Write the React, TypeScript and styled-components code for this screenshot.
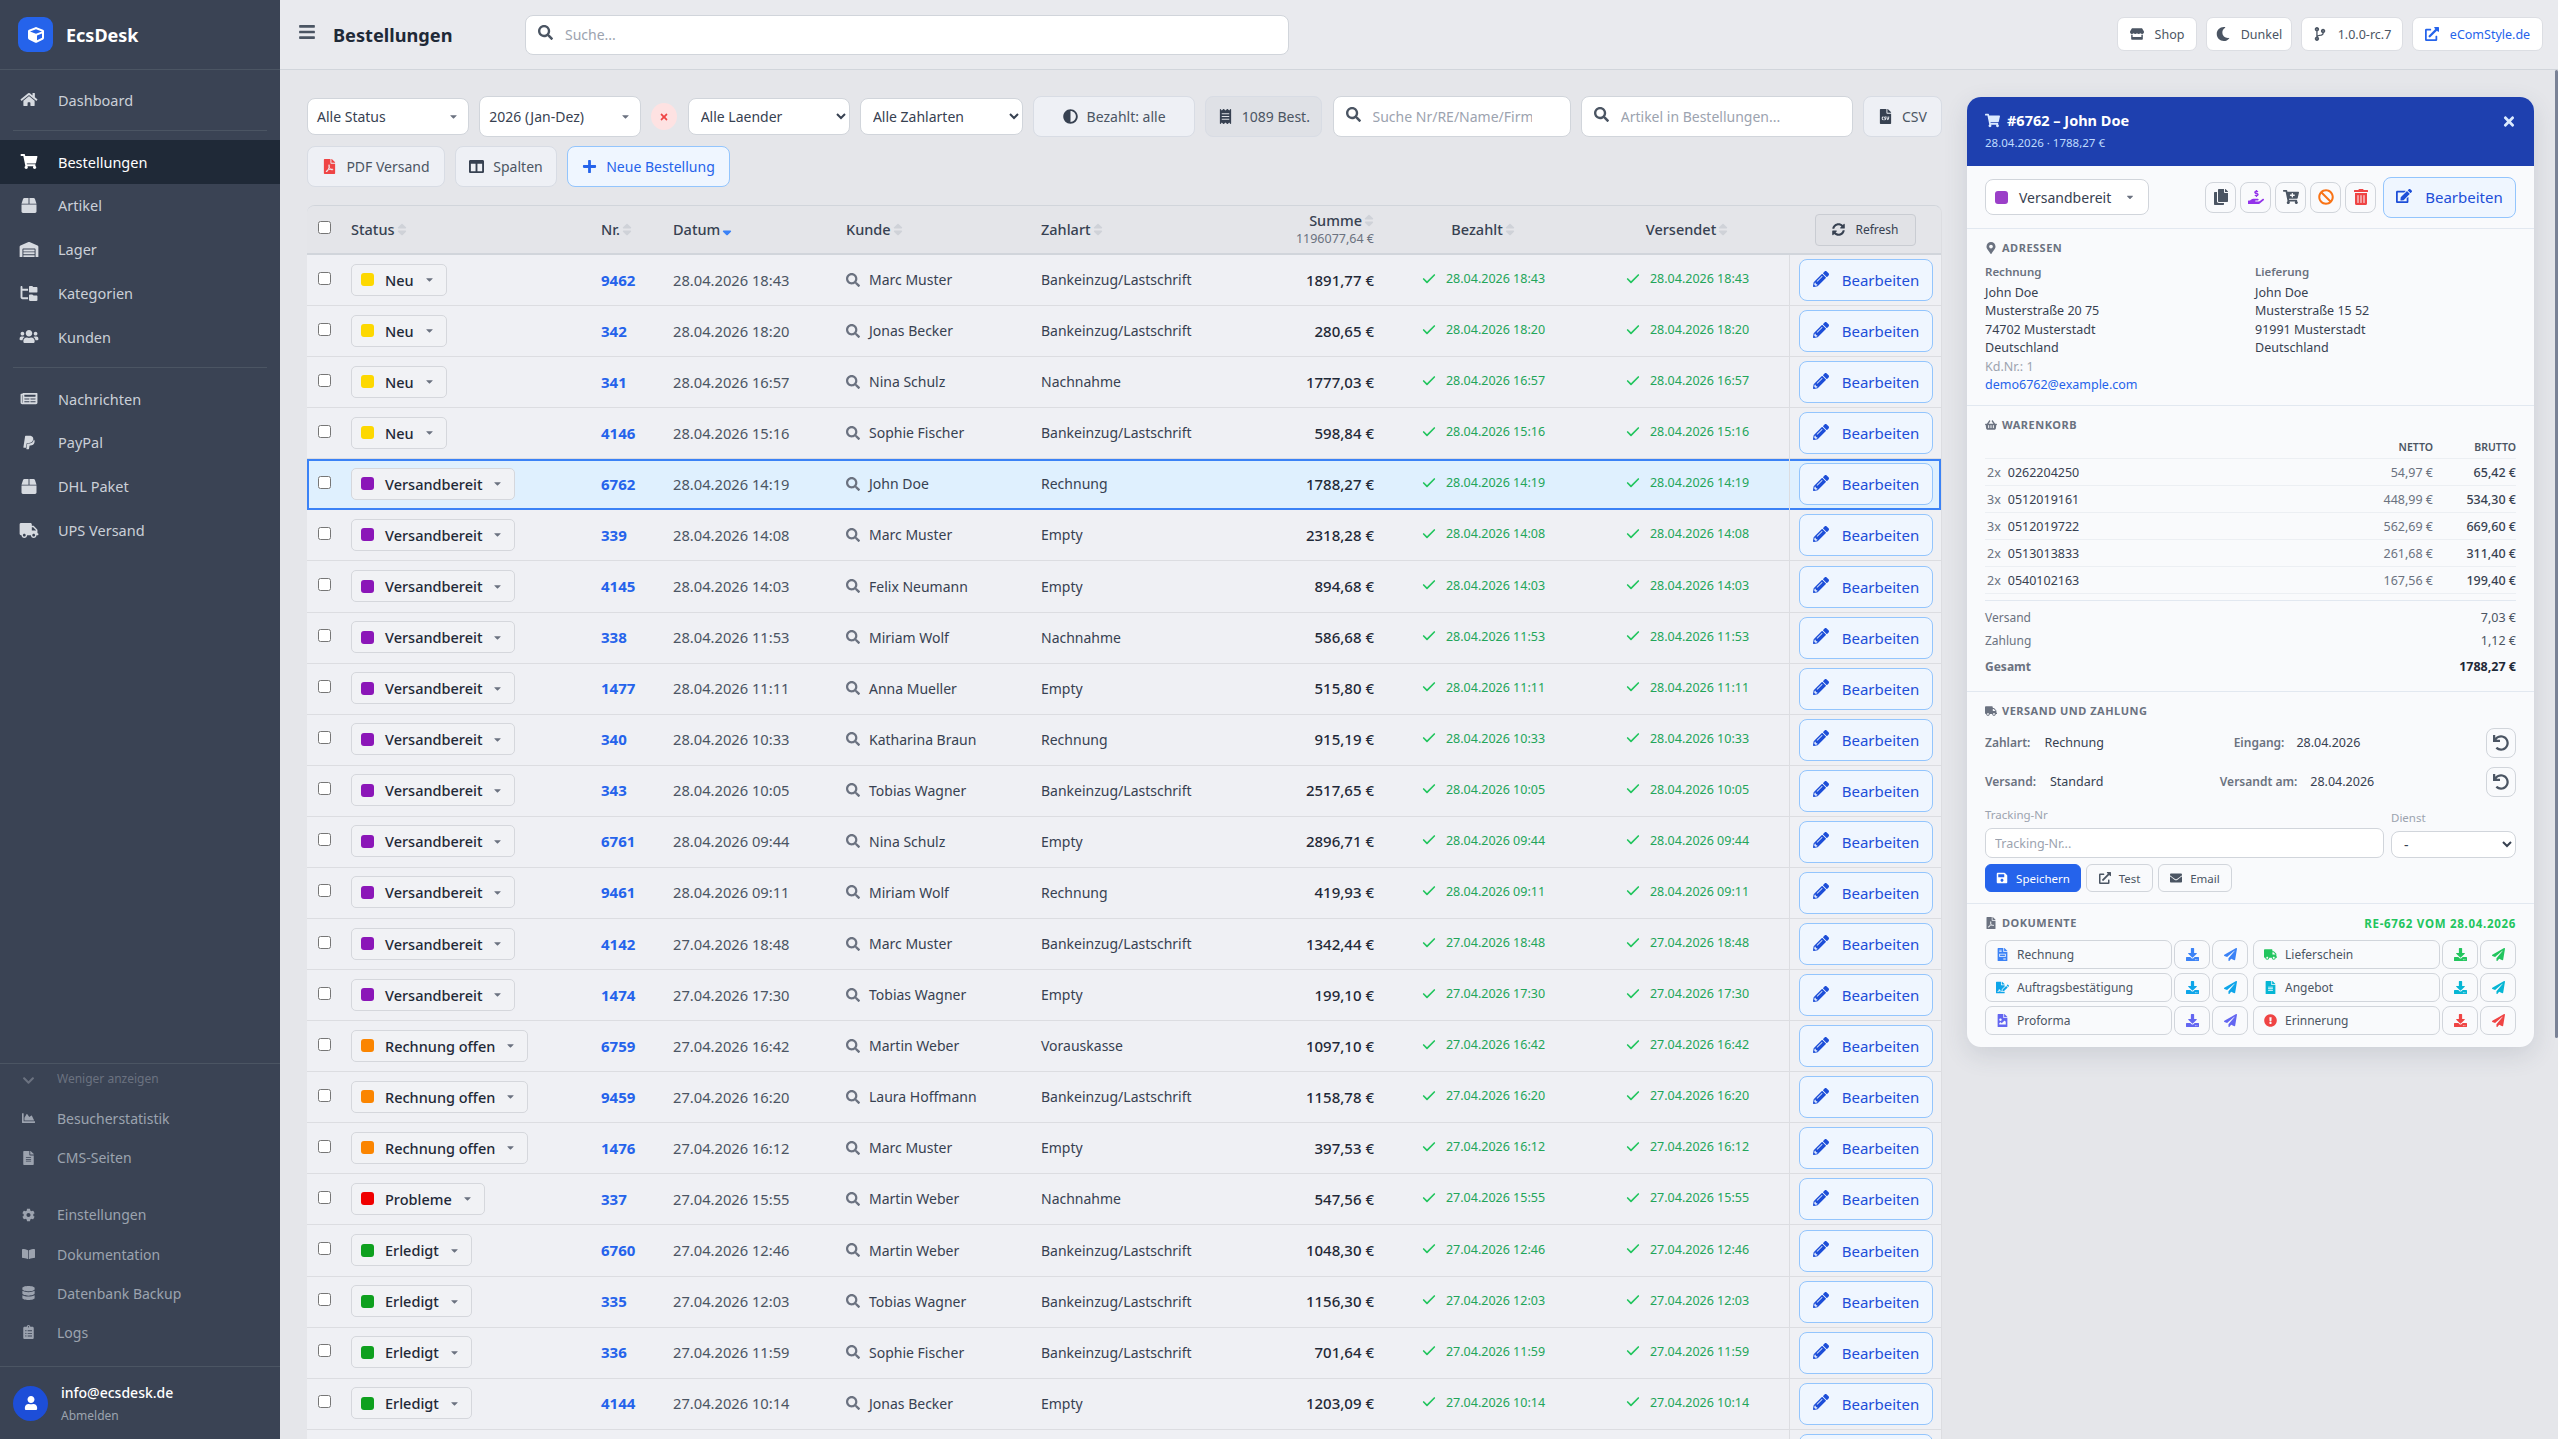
import React from 'react';
import styled, { createGlobalStyle } from 'styled-components';
import {
  FaHome, FaShoppingCart, FaBox, FaWarehouse, FaUsers, FaNewspaper, FaPaypal, FaTruck, FaChevronDown,
  FaChartArea, FaFileAlt, FaCog, FaBookOpen, FaDatabase, FaClipboardList, FaUser, FaBars, FaSearch, FaStore,
  FaMoon, FaCodeBranch, FaExternalLinkAlt, FaFilePdf, FaColumns, FaPlus, FaTimes, FaAdjust, FaReceipt, FaFileCsv,
  FaSyncAlt, FaPencilAlt, FaCopy, FaHandHoldingUsd, FaCartPlus, FaBan, FaTrashAlt, FaEdit, FaMapMarkerAlt,
  FaShoppingBasket, FaUndo, FaSave, FaEnvelope, FaFileInvoice, FaFileSignature, FaFileImage, FaExclamationCircle,
  FaDownload, FaPaperPlane, FaCube, FaSort, FaSortDown, FaCaretDown,
} from 'react-icons/fa';
import { FaFolderTree } from 'react-icons/fa6';
import { Check as CheckMark } from 'lucide-react';

const GlobalStyle = createGlobalStyle`
  html, body { margin: 0; padding: 0; height: 100%; overflow: hidden; }
  body { font-family: "Noto Sans", "Open Sans", sans-serif; color: #1f2937; background: #e5e6ea; }
  * { box-sizing: border-box; }
  input, select, button { font-family: inherit; }
`;

const Shell = styled.div`
  display: flex;
  width: 2558px;
  height: 1439px;
  overflow: hidden;
  position: relative;
`;

/* ---------- sidebar ---------- */
const Sidebar = styled.aside`
  width: 280px;
  flex: none;
  background: #3a4354;
  display: flex;
  flex-direction: column;
`;
const Brand = styled.div`
  height: 70px;
  padding: 0 18px;
  display: flex;
  align-items: center;
  gap: 13px;
  border-bottom: 1px solid #4b5563;
  color: #fff;
  font-size: 18px;
  font-weight: 700;
`;
const BrandLogo = styled.div`
  width: 35px;
  height: 35px;
  border-radius: 9px;
  background: #2563eb;
  display: flex;
  align-items: center;
  justify-content: center;
  font-size: 16px;
`;
const NavList = styled.nav`
  flex: 1;
  padding-top: 8px;
`;
const NavItem = styled.div<{ $active?: boolean }>`
  height: 43.8px;
  display: flex;
  align-items: center;
  padding-left: 19px;
  gap: 19px;
  font-size: 14.5px;
  color: ${p => (p.$active ? '#fff' : '#cbd0d8')};
  background: ${p => (p.$active ? '#1f2937' : 'transparent')};
  svg { width: 20px; height: 15px; flex: none; color: ${p => (p.$active ? '#fff' : '#d6dae0')}; }
`;
const NavRule = styled.div`
  height: 1px;
  background: #4b5563;
  margin: 8px 13px 9px;
`;
const LessBlock = styled.div`
  border-top: 1px solid #4b5563;
  padding-top: 4px;
`;
const LessToggle = styled.div`
  height: 22px;
  margin-bottom: 9px;
  display: flex;
  align-items: center;
  padding-left: 22px;
  gap: 22px;
  font-size: 12px;
  color: #6b7280;
  svg { width: 13px; height: 13px; margin-top: 4px; }
`;
const SubItem = styled.div`
  height: 39.2px;
  display: flex;
  align-items: center;
  padding-left: 22px;
  gap: 22px;
  font-size: 14px;
  color: #9ca3af;
  svg { width: 13px; height: 14px; flex: none; }
`;
const SubGap = styled.div`
  height: 18px;
`;
const UserBox = styled.div`
  margin-top: 14px;
  height: 73px;
  border-top: 1px solid #4b5563;
  padding: 0 13px;
  display: flex;
  align-items: center;
  gap: 13px;
`;
const Avatar = styled.div`
  width: 35px;
  height: 35px;
  border-radius: 50%;
  background: #1d4ed8;
  color: #fff;
  display: flex;
  align-items: center;
  justify-content: center;
  font-size: 14px;
`;
const UserMail = styled.div`
  color: #fff;
  font-size: 14px;
  font-weight: 500;
  line-height: 19px;
`;
const UserLogout = styled.div`
  color: #9ca3af;
  font-size: 12px;
  line-height: 16px;
  margin-top: 6px;
`;

/* ---------- main ---------- */
const Main = styled.div`
  flex: 1;
  min-width: 0;
  display: flex;
  flex-direction: column;
`;
const TopBar = styled.header`
  height: 70px;
  flex: none;
  background: #e9eaee;
  border-bottom: 1px solid #d1d5db;
  display: flex;
  align-items: center;
  padding: 0 15px 0 18px;
`;
const Burger = styled.div`
  color: #4b5563;
  font-size: 18px;
  display: flex;
  margin-top: -6px;
`;
const PageTitle = styled.h1`
  margin: 0 0 0 17px;
  width: 192px;
  font-size: 18.2px;
  font-weight: 700;
  color: #1f2937;
`;
const SearchBox = styled.div<{ $w: number; $h?: number; $clip?: number }>`
  width: ${p => p.$w}px;
  height: ${p => p.$h ?? 40}px;
  flex: none;
  background: #fff;
  border: 1px solid #d1d5db;
  border-radius: 8px;
  display: flex;
  align-items: center;
  padding: 0 ${p => p.$clip ?? 12}px 0 12px;
  gap: 12px;
  color: #4b5563;
  svg { width: 15px; height: 15px; flex: none; margin-top: -5px; }
  input {
    border: 0;
    outline: 0;
    padding: 0;
    background: transparent;
    min-width: 0;
    width: 100%;
    font-size: 14px;
    color: #374151;
  }
  input::placeholder { color: #9ca3af; opacity: 1; }
`;
const TopActions = styled.div`
  margin-left: auto;
  display: flex;
  gap: 9px;
  margin-top: -1px;
`;
const TopButton = styled.div<{ $w: number; $link?: boolean }>`
  width: ${p => p.$w}px;
  height: 34px;
  gap: 11px;
  display: flex;
  align-items: center;
  justify-content: center;
  background: #fff;
  border: 1px solid #dcdee3;
  border-radius: 7px;
  font-size: 12.5px;
  color: ${p => (p.$link ? '#2563eb' : '#4b5563')};
  svg { width: 14px; height: 14px; }
`;

const Content = styled.div`
  flex: 1;
  min-height: 0;
  display: flex;
  align-items: flex-start;
  padding: 26px 24px 0 27px;
  gap: 25px;
`;
const ListColumn = styled.section`
  width: 1635px;
  flex: none;
`;
const FilterRow = styled.div<{ $spread?: boolean }>`
  display: flex;
  align-items: center;
  justify-content: ${p => (p.$spread ? 'space-between' : 'flex-start')};
  gap: 10px;
  height: 41px;
  margin-bottom: 9px;
`;
const SelectBox = styled.div<{ $tall?: boolean }>`
  width: 162px;
  height: ${p => (p.$tall ? 41 : 37)}px;
  flex: none;
  background: #fff;
  border: 1px solid #d1d5db;
  border-radius: 8px;
  padding: 0 9px;
  display: flex;
  align-items: center;
  justify-content: space-between;
  font-size: 14px;
  color: #374151;
  svg { width: 11px; height: 11px; color: #6b7280; }
`;
const NativeSelect = styled.select<{ $w?: number; $h?: number }>`
  width: ${p => p.$w ?? 162}px;
  height: ${p => p.$h ?? 37}px;
  flex: none;
  background: #fff;
  border: 1px solid #d1d5db;
  border-radius: 8px;
  padding: 0 8px;
  font-size: 14px;
  color: #374151;
`;
const ClearPill = styled.div`
  width: 26px;
  height: 27px;
  flex: none;
  border-radius: 50%;
  background: #fee2e2;
  color: #ef4444;
  display: flex;
  align-items: center;
  justify-content: center;
  font-size: 10px;
`;
const ToolButton = styled.div<{ $w: number; $tone?: 'muted' | 'blue'; $icon?: string }>`
  width: ${p => p.$w}px;
  height: 41px;
  flex: none;
  display: flex;
  align-items: center;
  justify-content: center;
  gap: 9px;
  font-size: 14px;
  border-radius: 8px;
  border: 1px solid ${p => (p.$tone === 'blue' ? '#93c5fd' : '#d8dce4')};
  background: ${p => (p.$tone === 'blue' ? '#eff6ff' : p.$tone === 'muted' ? '#dfe1e6' : '#eef0f5')};
  color: ${p => (p.$tone === 'blue' ? '#2563eb' : '#4b5563')};
  svg {
    width: 15px;
    height: 15px;
    flex: none;
    color: ${p => p.$icon ?? (p.$tone === 'blue' ? '#2563eb' : '#374151')};
  }
`;

/* ---------- table ---------- */
const COLS = '37px 250px 72px 173px 195px 206px 141px 204px 204px 153px';
const TableCard = styled.div`
  margin-top: 18px;
  border-top: 1px solid #d1d5db;
  border-radius: 8px 8px 0 0;
  overflow: hidden;
  border-right: 1px solid #dcdde1;
`;
const HeadRow = styled.div`
  display: grid;
  grid-template-columns: ${COLS};
  height: 49px;
  background: #e4e5e9;
  border-bottom: 2px solid #d1d5db;
  font-size: 14.5px;
  font-weight: 500;
  color: #374151;
`;
const HeadCell = styled.div<{ $align?: string }>`
  display: flex;
  flex-direction: column;
  justify-content: center;
  align-items: ${p => p.$align ?? 'flex-start'};
  padding: 0 7px 1px;
`;
const HeadLabel = styled.span`
  display: flex;
  align-items: center;
  gap: 2px;
  line-height: 17px;
  svg { width: 10px; height: 15px; color: #cfd2d8; }
`;
const SumLine = styled.span`
  font-size: 12.5px;
  font-weight: 400;
  line-height: 15px;
  color: #6b7280;
  margin-top: 2px;
`;
const ActiveSort = styled.span`
  display: flex;
  svg { width: 10px; height: 15px; color: #3b82f6; }
`;
const RefreshButton = styled.div`
  width: 101px;
  height: 32px;
  align-self: center;
  margin-left: 26px;
  border: 1px solid #c9ccd2;
  border-radius: 4px;
  background: #e1e2e6;
  display: flex;
  align-items: center;
  justify-content: center;
  gap: 10px;
  font-size: 12px;
  font-weight: 400;
  color: #374151;
  svg { width: 13px; height: 13px; }
`;
const Row = styled.div<{ $selected?: boolean }>`
  display: grid;
  grid-template-columns: ${COLS};
  height: 51.08px;
  font-size: 14px;
  color: #374151;
  background: ${p => (p.$selected ? '#dff0fe' : '#eff0f4')};
  box-shadow: ${p => (p.$selected ? 'inset 0 0 0 2px #3b82f6' : 'inset 0 -1px 0 #dcdde1')};
`;
const Cell = styled.div<{ $right?: boolean; $center?: boolean }>`
  display: flex;
  align-items: center;
  padding: 0 7px 2px;
  min-width: 0;
  white-space: nowrap;
  justify-content: ${p => (p.$right ? 'flex-end' : p.$center ? 'center' : 'flex-start')};
`;
const CheckCell = styled(Cell)`
  padding: 0 0 5px 11px;
`;
const Check = styled.input.attrs({ type: 'checkbox' })`
  width: 13px;
  height: 13px;
  margin: 0;
`;
const StatusPill = styled.div`
  height: 32px;
  padding: 0 11px 0 9px;
  display: inline-flex;
  align-items: center;
  background: #f1f2f5;
  border: 1px solid #d5d7dc;
  border-radius: 5px;
  font-size: 14.5px;
  font-weight: 500;
  color: #1f2937;
  svg { width: 11px; height: 11px; margin-left: 10px; color: #6b7280; }
`;
const StatusDot = styled.span<{ $color: string }>`
  width: 13px;
  height: 13px;
  border-radius: 3px;
  background: ${p => p.$color};
  margin-right: 11px;
  flex: none;
`;
const OrderNo = styled.span`
  color: #2563eb;
  font-weight: 700;
  font-size: 15px;
`;
const DateText = styled.span`
  color: #4b5563;
  font-size: 14.7px;
`;
const CustomerCell = styled(Cell)`
  gap: 9px;
  color: #374151;
  svg { width: 14px; height: 14px; color: #6b7280; flex: none; }
`;
const Amount = styled.span`
  font-weight: 500;
  font-size: 15px;
  color: #1f2937;
`;
const DoneStamp = styled.span`
  display: flex;
  align-items: center;
  gap: 9px;
  color: #22a559;
  font-size: 12.5px;
  margin-top: -2px;
  svg { width: 16px; height: 16px; color: #22c55e; }
`;
const ActionCell = styled.div`
  border-left: 1px solid #dcdde1;
  display: flex;
  align-items: center;
  padding: 0 0 1px 9px;
`;
const EditButton = styled.div<{ $panel?: boolean }>`
  width: ${p => (p.$panel ? 133 : 134)}px;
  height: ${p => (p.$panel ? 41 : 42)}px;
  margin-left: ${p => (p.$panel ? 3 : 0)}px;
  flex: none;
  display: flex;
  align-items: center;
  justify-content: center;
  gap: 13px;
  background: #eff6ff;
  border: 1px solid #93c5fd;
  border-radius: 8px;
  color: #1d4ed8;
  font-size: 15px;
  svg { width: 16px; height: 16px; margin-top: -3px; }
`;

/* ---------- detail panel ---------- */
const Panel = styled.aside`
  width: 567px;
  flex: none;
  margin-top: 1px;
  background: #f9fafc;
  border-radius: 14px;
  overflow: hidden;
  box-shadow: 0 8px 24px rgba(60, 70, 90, 0.14);
`;
const PanelHead = styled.div`
  height: 69px;
  background: #1e40af;
  color: #fff;
  padding: 13px 18px 0;
  display: flex;
  justify-content: space-between;
`;
const PanelTitle = styled.div`
  display: flex;
  align-items: center;
  gap: 7px;
  font-size: 14.5px;
  font-weight: 700;
  line-height: 20px;
  svg { width: 15px; height: 15px; color: #dbeafe; }
`;
const PanelSub = styled.div`
  font-size: 11.5px;
  line-height: 16px;
  color: #bfdbfe;
  margin-top: 5px;
`;
const PanelClose = styled.div`
  display: flex;
  margin-top: 4px;
  color: #dbeafe;
  svg { width: 14px; height: 15px; }
`;
const PanelTools = styled.div`
  height: 63px;
  padding: 0 18px;
  display: flex;
  align-items: center;
  border-bottom: 1px solid #e2e8f0;
`;
const PanelStatus = styled.div`
  width: 164px;
  height: 36px;
  border: 1px solid #d1d5db;
  border-radius: 8px;
  background: #fff;
  display: flex;
  align-items: center;
  padding: 0 9px;
  font-size: 14px;
  color: #374151;
  svg { width: 10px; height: 10px; margin-left: auto; color: #6b7280; margin-right: 4px; }
`;
const ToolGroup = styled.div`
  margin-left: auto;
  display: flex;
  align-items: center;
  gap: 4px;
`;
const SquareButton = styled.div<{ $color: string; $w?: number; $h?: number; $icon?: number; $end?: boolean }>`
  width: ${p => p.$w ?? 31}px;
  height: ${p => p.$h ?? 31}px;
  flex: none;
  justify-self: ${p => (p.$end ? 'end' : 'auto')};
  border: 1px solid #d1d5db;
  border-radius: 8px;
  display: flex;
  align-items: center;
  justify-content: center;
  color: ${p => p.$color};
  svg { width: ${p => p.$icon ?? 16}px; height: ${p => p.$icon ?? 16}px; }
`;
const Section = styled.section<{ $h: number }>`
  height: ${p => p.$h}px;
  padding: 11px 18px 0;
  border-bottom: 1px solid #e2e8f0;
  &:last-child { border-bottom: 0; }
`;
const SectionTitle = styled.div`
  display: flex;
  align-items: center;
  gap: 5px;
  font-size: 11px;
  line-height: 16px;
  font-weight: 700;
  letter-spacing: 0.5px;
  text-transform: uppercase;
  color: #6b7280;
  svg { width: auto; height: 12px; }
`;
const AddressGrid = styled.div`
  display: grid;
  grid-template-columns: 1fr 1fr;
  gap: 9px;
  margin-top: 8px;
`;
const AddressName = styled.div`
  font-size: 11.5px;
  line-height: 16px;
  font-weight: 600;
  color: #6b7280;
  margin-bottom: 4px;
`;
const AddressLine = styled.div`
  font-size: 12.5px;
  line-height: 18.4px;
  color: #374151;
`;
const MutedLine = styled(AddressLine)`
  color: #9ca3af;
`;
const MailLine = styled(AddressLine)`
  color: #2563eb;
`;
const CartGrid = styled.div`
  display: grid;
  grid-template-columns: 1fr 90px 83px;
  margin-top: 7px;
`;
const CartHead = styled.div`
  font-size: 10.5px;
  font-weight: 600;
  text-align: right;
  line-height: 15px;
  height: 19px;
  color: #4b5563;
  border-bottom: 1px solid #eceff3;
`;
const CartCell = styled.div<{ $right?: boolean; $strong?: boolean; $soft?: boolean }>`
  height: 27px;
  display: flex;
  align-items: center;
  justify-content: ${p => (p.$right ? 'flex-end' : 'flex-start')};
  font-size: 12.5px;
  font-weight: ${p => (p.$strong ? 500 : 400)};
  color: ${p => (p.$soft ? '#6b7280' : '#374151')};
  border-bottom: 1px solid #eceff3;
`;
const Qty = styled.span`
  color: #6b7280;
  margin: 0 7px 0 2px;
`;
const Totals = styled.div`
  margin-top: 6px;
  border-top: 1px solid #e2e8f0;
  padding-top: 4px;
`;
const TotalRow = styled.div<{ $strong?: boolean; $h: number }>`
  height: ${p => p.$h}px;
  display: flex;
  align-items: center;
  justify-content: space-between;
  font-size: 12px;
  color: #6b7280;
  font-weight: ${p => (p.$strong ? 700 : 400)};
  b { color: ${p => (p.$strong ? '#1f2937' : '#4b5563')}; font-weight: inherit; font-size: 12.5px; }
`;
const InfoGrid = styled.div`
  display: grid;
  grid-template-columns: 193px 238px 1fr;
  grid-auto-rows: 39px;
  margin-top: 4px;
  align-items: center;
  font-size: 12.5px;
  color: #374151;
`;
const InfoPair = styled.div<{ $gap: number; $center?: boolean }>`
  display: flex;
  gap: ${p => p.$gap}px;
  justify-content: ${p => (p.$center ? 'center' : 'flex-start')};
  b { font-weight: 600; color: #6b7280; font-size: 12px; }
`;
const TrackingRow = styled.div`
  display: grid;
  grid-template-columns: 399px 125px;
  justify-content: space-between;
  align-items: end;
  margin-top: 6px;
`;
const FieldLabel = styled.div`
  font-size: 11.5px;
  line-height: 16px;
  margin-bottom: 5px;
  color: #9ca3af;
`;
const TrackingInput = styled.input`
  width: 100%;
  height: 30px;
  border: 1px solid #d1d5db;
  border-radius: 7px;
  background: #fff;
  padding: 0 9px;
  font-size: 12.5px;
  &::placeholder { color: #9ca3af; opacity: 1; }
`;
const ButtonRow = styled.div`
  display: flex;
  gap: 5px;
  margin-top: 6px;
`;
const SmallButton = styled.div<{ $w: number; $primary?: boolean }>`
  width: ${p => p.$w}px;
  height: 28px;
  border-radius: 6px;
  display: flex;
  align-items: center;
  justify-content: center;
  gap: 8px;
  font-size: 11.5px;
  border: 1px solid ${p => (p.$primary ? '#2563eb' : '#d1d5db')};
  background: ${p => (p.$primary ? '#2563eb' : 'transparent')};
  color: ${p => (p.$primary ? '#fff' : '#4b5563')};
  svg { width: 12px; height: 12px; }
`;
const DocTitleRow = styled.div`
  display: flex;
  justify-content: space-between;
  align-items: center;
`;
const InvoiceRef = styled.span`
  font-size: 11.5px;
  font-weight: 700;
  letter-spacing: 0.7px;
  color: #22c55e;
`;
const DocGrid = styled.div`
  display: grid;
  grid-template-columns: 1fr 1fr;
  gap: 4.5px 5px;
  margin-top: 9px;
`;
const DocRow = styled.div`
  display: grid;
  grid-template-columns: 1fr 36px 36px;
  gap: 2px;
`;
const DocName = styled.div<{ $color: string }>`
  height: 28.5px;
  border: 1px solid #d1d5db;
  border-radius: 7px;
  display: flex;
  align-items: center;
  gap: 8px;
  padding-left: 10px;
  font-size: 12px;
  color: #4b5563;
  svg { width: 13px; height: 13px; color: ${p => p.$color}; flex: none; }
`;
const Scrollbar = styled.div`
  position: absolute;
  top: 70px;
  right: 0;
  width: 3px;
  height: 968px;
  border-radius: 2px;
  background: #7a8296;
`;

const STATUS: Record<string, string> = {
  Neu: '#fdd800',
  Versandbereit: '#8b16b8',
  'Rechnung offen': '#fb8500',
  Probleme: '#f00000',
  Erledigt: '#0ea01e',
};

const ORDERS: [string, string, string, string, string, string, string][] = [
  ['Neu', '9462', '28.04.2026 18:43', 'Marc Muster', 'Bankeinzug/Lastschrift', '1891,77 €', ''],
  ['Neu', '342', '28.04.2026 18:20', 'Jonas Becker', 'Bankeinzug/Lastschrift', '280,65 €', ''],
  ['Neu', '341', '28.04.2026 16:57', 'Nina Schulz', 'Nachnahme', '1777,03 €', ''],
  ['Neu', '4146', '28.04.2026 15:16', 'Sophie Fischer', 'Bankeinzug/Lastschrift', '598,84 €', ''],
  ['Versandbereit', '6762', '28.04.2026 14:19', 'John Doe', 'Rechnung', '1788,27 €', 'x'],
  ['Versandbereit', '339', '28.04.2026 14:08', 'Marc Muster', 'Empty', '2318,28 €', ''],
  ['Versandbereit', '4145', '28.04.2026 14:03', 'Felix Neumann', 'Empty', '894,68 €', ''],
  ['Versandbereit', '338', '28.04.2026 11:53', 'Miriam Wolf', 'Nachnahme', '586,68 €', ''],
  ['Versandbereit', '1477', '28.04.2026 11:11', 'Anna Mueller', 'Empty', '515,80 €', ''],
  ['Versandbereit', '340', '28.04.2026 10:33', 'Katharina Braun', 'Rechnung', '915,19 €', ''],
  ['Versandbereit', '343', '28.04.2026 10:05', 'Tobias Wagner', 'Bankeinzug/Lastschrift', '2517,65 €', ''],
  ['Versandbereit', '6761', '28.04.2026 09:44', 'Nina Schulz', 'Empty', '2896,71 €', ''],
  ['Versandbereit', '9461', '28.04.2026 09:11', 'Miriam Wolf', 'Rechnung', '419,93 €', ''],
  ['Versandbereit', '4142', '27.04.2026 18:48', 'Marc Muster', 'Bankeinzug/Lastschrift', '1342,44 €', ''],
  ['Versandbereit', '1474', '27.04.2026 17:30', 'Tobias Wagner', 'Empty', '199,10 €', ''],
  ['Rechnung offen', '6759', '27.04.2026 16:42', 'Martin Weber', 'Vorauskasse', '1097,10 €', ''],
  ['Rechnung offen', '9459', '27.04.2026 16:20', 'Laura Hoffmann', 'Bankeinzug/Lastschrift', '1158,78 €', ''],
  ['Rechnung offen', '1476', '27.04.2026 16:12', 'Marc Muster', 'Empty', '397,53 €', ''],
  ['Probleme', '337', '27.04.2026 15:55', 'Martin Weber', 'Nachnahme', '547,56 €', ''],
  ['Erledigt', '6760', '27.04.2026 12:46', 'Martin Weber', 'Bankeinzug/Lastschrift', '1048,30 €', ''],
  ['Erledigt', '335', '27.04.2026 12:03', 'Tobias Wagner', 'Bankeinzug/Lastschrift', '1156,30 €', ''],
  ['Erledigt', '336', '27.04.2026 11:59', 'Sophie Fischer', 'Bankeinzug/Lastschrift', '701,64 €', ''],
  ['Erledigt', '4144', '27.04.2026 10:14', 'Jonas Becker', 'Empty', '1203,09 €', ''],
];

const CART = [
  ['2x', '0262204250', '54,97 €', '65,42 €'],
  ['3x', '0512019161', '448,99 €', '534,30 €'],
  ['3x', '0512019722', '562,69 €', '669,60 €'],
  ['2x', '0513013833', '261,68 €', '311,40 €'],
  ['2x', '0540102163', '167,56 €', '199,40 €'],
];

const DOCS = [
  { name: 'Rechnung', color: '#3b82f6', icon: <FaFileInvoice /> },
  { name: 'Lieferschein', color: '#22c55e', icon: <FaTruck /> },
  { name: 'Auftragsbestätigung', color: '#0ea5e9', icon: <FaFileSignature /> },
  { name: 'Angebot', color: '#06b6d4', icon: <FaFileAlt /> },
  { name: 'Proforma', color: '#6366f1', icon: <FaFileImage /> },
  { name: 'Erinnerung', color: '#ef4444', icon: <FaExclamationCircle /> },
];

const Sortable: React.FC<{ label: string }> = ({ label }) => (
  <HeadLabel>{label}<FaSort /></HeadLabel>
);

const Address: React.FC<{ title: string; lines: string[]; children?: React.ReactNode }> = ({ title, lines, children }) => (
  <div>
    <AddressName>{title}</AddressName>
    {lines.map(l => <AddressLine key={l}>{l}</AddressLine>)}
    {children}
  </div>
);

export default function App() {
  return (
    <Shell>
      <GlobalStyle />
      <Sidebar>
        <Brand><BrandLogo><FaCube /></BrandLogo>EcsDesk</Brand>
        <NavList>
          <NavItem><FaHome />Dashboard</NavItem>
          <NavRule />
          <NavItem $active><FaShoppingCart />Bestellungen</NavItem>
          <NavItem><FaBox />Artikel</NavItem>
          <NavItem><FaWarehouse />Lager</NavItem>
          <NavItem><FaFolderTree />Kategorien</NavItem>
          <NavItem><FaUsers />Kunden</NavItem>
          <NavRule />
          <NavItem><FaNewspaper />Nachrichten</NavItem>
          <NavItem><FaPaypal />PayPal</NavItem>
          <NavItem><FaBox />DHL Paket</NavItem>
          <NavItem><FaTruck />UPS Versand</NavItem>
        </NavList>
        <LessBlock>
          <LessToggle><FaChevronDown />Weniger anzeigen</LessToggle>
          <SubItem><FaChartArea />Besucherstatistik</SubItem>
          <SubItem><FaFileAlt />CMS-Seiten</SubItem>
          <SubGap />
          <SubItem><FaCog />Einstellungen</SubItem>
          <SubItem><FaBookOpen />Dokumentation</SubItem>
          <SubItem><FaDatabase />Datenbank Backup</SubItem>
          <SubItem><FaClipboardList />Logs</SubItem>
        </LessBlock>
        <UserBox>
          <Avatar><FaUser /></Avatar>
          <div>
            <UserMail>info@ecsdesk.de</UserMail>
            <UserLogout>Abmelden</UserLogout>
          </div>
        </UserBox>
      </Sidebar>

      <Main>
        <TopBar>
          <Burger><FaBars /></Burger>
          <PageTitle>Bestellungen</PageTitle>
          <SearchBox $w={764}><FaSearch /><input placeholder="Suche..." /></SearchBox>
          <TopActions>
            <TopButton $w={80}><FaStore />Shop</TopButton>
            <TopButton $w={86}><FaMoon />Dunkel</TopButton>
            <TopButton $w={102}><FaCodeBranch />1.0.0-rc.7</TopButton>
            <TopButton $w={131} $link><FaExternalLinkAlt />eComStyle.de</TopButton>
          </TopActions>
        </TopBar>

        <Content>
          <ListColumn>
            <FilterRow $spread>
              <SelectBox>Alle Status<FaCaretDown /></SelectBox>
              <SelectBox $tall>2026 (Jan-Dez)<FaCaretDown /></SelectBox>
              <ClearPill><FaTimes /></ClearPill>
              <NativeSelect defaultValue="de"><option value="de">Alle Laender</option></NativeSelect>
              <NativeSelect $w={163} defaultValue="za"><option value="za">Alle Zahlarten</option></NativeSelect>
              <ToolButton $w={162}><FaAdjust />Bezahlt: alle</ToolButton>
              <ToolButton $w={117} $tone="muted"><FaReceipt />1089 Best.</ToolButton>
              <SearchBox $w={238} $h={41} $clip={38}><FaSearch /><input placeholder="Suche Nr/RE/Name/Firma..." /></SearchBox>
              <SearchBox $w={272} $h={41}><FaSearch /><input placeholder="Artikel in Bestellungen..." /></SearchBox>
              <ToolButton $w={79}><FaFileCsv />CSV</ToolButton>
            </FilterRow>
            <FilterRow>
              <ToolButton $w={138} $icon="#ef4444"><FaFilePdf />PDF Versand</ToolButton>
              <ToolButton $w={102}><FaColumns />Spalten</ToolButton>
              <ToolButton $w={163} $tone="blue"><FaPlus />Neue Bestellung</ToolButton>
            </FilterRow>

            <TableCard>
              <HeadRow>
                <CheckCell><Check /></CheckCell>
                <HeadCell><Sortable label="Status" /></HeadCell>
                <HeadCell><Sortable label="Nr." /></HeadCell>
                <HeadCell><HeadLabel>Datum<ActiveSort><FaSortDown /></ActiveSort></HeadLabel></HeadCell>
                <HeadCell><Sortable label="Kunde" /></HeadCell>
                <HeadCell><Sortable label="Zahlart" /></HeadCell>
                <HeadCell $align="flex-end"><Sortable label="Summe" /><SumLine>1196077,64 €</SumLine></HeadCell>
                <HeadCell $align="center"><Sortable label="Bezahlt" /></HeadCell>
                <HeadCell $align="center"><Sortable label="Versendet" /></HeadCell>
                <RefreshButton><FaSyncAlt />Refresh</RefreshButton>
              </HeadRow>
              {ORDERS.map(([status, nr, date, customer, pay, sum, sel]) => (
                <Row key={nr} $selected={!!sel}>
                  <CheckCell><Check /></CheckCell>
                  <Cell><StatusPill><StatusDot $color={STATUS[status]} />{status}<FaCaretDown /></StatusPill></Cell>
                  <Cell><OrderNo>{nr}</OrderNo></Cell>
                  <Cell><DateText>{date}</DateText></Cell>
                  <CustomerCell><FaSearch />{customer}</CustomerCell>
                  <Cell>{pay}</Cell>
                  <Cell $right><Amount>{sum}</Amount></Cell>
                  <Cell $center><DoneStamp><CheckMark strokeWidth={2.5} />{date}</DoneStamp></Cell>
                  <Cell $center><DoneStamp><CheckMark strokeWidth={2.5} />{date}</DoneStamp></Cell>
                  <ActionCell><EditButton><FaPencilAlt />Bearbeiten</EditButton></ActionCell>
                </Row>
              ))}
              <Row>
                <Cell /><Cell /><Cell /><Cell /><Cell /><Cell /><Cell /><Cell /><Cell />
                <ActionCell><EditButton /></ActionCell>
              </Row>
            </TableCard>
          </ListColumn>

          <Panel>
            <PanelHead>
              <div>
                <PanelTitle><FaShoppingCart />#6762 – John Doe</PanelTitle>
                <PanelSub>28.04.2026 · 1788,27 €</PanelSub>
              </div>
              <PanelClose><FaTimes /></PanelClose>
            </PanelHead>
            <PanelTools>
              <PanelStatus><StatusDot $color="#9b3fc8" />Versandbereit<FaCaretDown /></PanelStatus>
              <ToolGroup>
                <SquareButton $color="#4b5563"><FaCopy /></SquareButton>
                <SquareButton $color="#9333ea"><FaHandHoldingUsd /></SquareButton>
                <SquareButton $color="#4b5563"><FaCartPlus /></SquareButton>
                <SquareButton $color="#f97316"><FaBan /></SquareButton>
                <SquareButton $color="#ef4444"><FaTrashAlt /></SquareButton>
                <EditButton $panel><FaEdit />Bearbeiten</EditButton>
              </ToolGroup>
            </PanelTools>
            <Section $h={177}>
              <SectionTitle><FaMapMarkerAlt />Adressen</SectionTitle>
              <AddressGrid>
                <Address title="Rechnung" lines={['John Doe', 'Musterstraße 20 75', '74702 Musterstadt', 'Deutschland']}>
                  <MutedLine>Kd.Nr.: 1</MutedLine>
                  <MailLine>demo6762@example.com</MailLine>
                </Address>
                <Address title="Lieferung" lines={['John Doe', 'Musterstraße 15 52', '91991 Musterstadt', 'Deutschland']} />
              </AddressGrid>
            </Section>
            <Section $h={286}>
              <SectionTitle><FaShoppingBasket />Warenkorb</SectionTitle>
              <CartGrid>
                <CartHead /><CartHead>NETTO</CartHead><CartHead>BRUTTO</CartHead>
                {CART.map(([qty, sku, net, gross]) => (
                  <React.Fragment key={sku}>
                    <CartCell><Qty>{qty}</Qty>{sku}</CartCell>
                    <CartCell $right $soft>{net}</CartCell>
                    <CartCell $right $strong>{gross}</CartCell>
                  </React.Fragment>
                ))}
              </CartGrid>
              <Totals>
                <TotalRow $h={24}>Versand<b>7,03 €</b></TotalRow>
                <TotalRow $h={23}>Zahlung<b>1,12 €</b></TotalRow>
                <TotalRow $h={28} $strong>Gesamt<b>1788,27 €</b></TotalRow>
              </Totals>
            </Section>
            <Section $h={212}>
              <SectionTitle><FaTruck />Versand und Zahlung</SectionTitle>
              <InfoGrid>
                <InfoPair $gap={14}><b>Zahlart:</b>Rechnung</InfoPair>
                <InfoPair $gap={12} $center><b>Eingang:</b>28.04.2026</InfoPair>
                <SquareButton $color="#4b5563" $w={30} $h={30} $end><FaUndo /></SquareButton>
                <InfoPair $gap={14}><b>Versand:</b>Standard</InfoPair>
                <InfoPair $gap={13} $center><b>Versandt am:</b>28.04.2026</InfoPair>
                <SquareButton $color="#4b5563" $w={30} $h={30} $end><FaUndo /></SquareButton>
              </InfoGrid>
              <TrackingRow>
                <div>
                  <FieldLabel>Tracking-Nr</FieldLabel>
                  <TrackingInput placeholder="Tracking-Nr..." />
                </div>
                <div>
                  <FieldLabel>Dienst</FieldLabel>
                  <NativeSelect $w={125} $h={27} defaultValue="-"><option value="-">-</option></NativeSelect>
                </div>
              </TrackingRow>
              <ButtonRow>
                <SmallButton $w={96} $primary><FaSave />Speichern</SmallButton>
                <SmallButton $w={67}><FaExternalLinkAlt />Test</SmallButton>
                <SmallButton $w={74}><FaEnvelope />Email</SmallButton>
              </ButtonRow>
            </Section>
            <Section $h={143}>
              <DocTitleRow>
                <SectionTitle><FaFilePdf />Dokumente</SectionTitle>
                <InvoiceRef>RE-6762 VOM 28.04.2026</InvoiceRef>
              </DocTitleRow>
              <DocGrid>
                {DOCS.map(d => (
                  <DocRow key={d.name}>
                    <DocName $color={d.color}>{d.icon}{d.name}</DocName>
                    <SquareButton $color={d.color} $w={36} $h={28.5} $icon={13}><FaDownload /></SquareButton>
                    <SquareButton $color={d.color} $w={36} $h={28.5} $icon={13}><FaPaperPlane /></SquareButton>
                  </DocRow>
                ))}
              </DocGrid>
            </Section>
          </Panel>
        </Content>
      </Main>
      <Scrollbar />
    </Shell>
  );
}
